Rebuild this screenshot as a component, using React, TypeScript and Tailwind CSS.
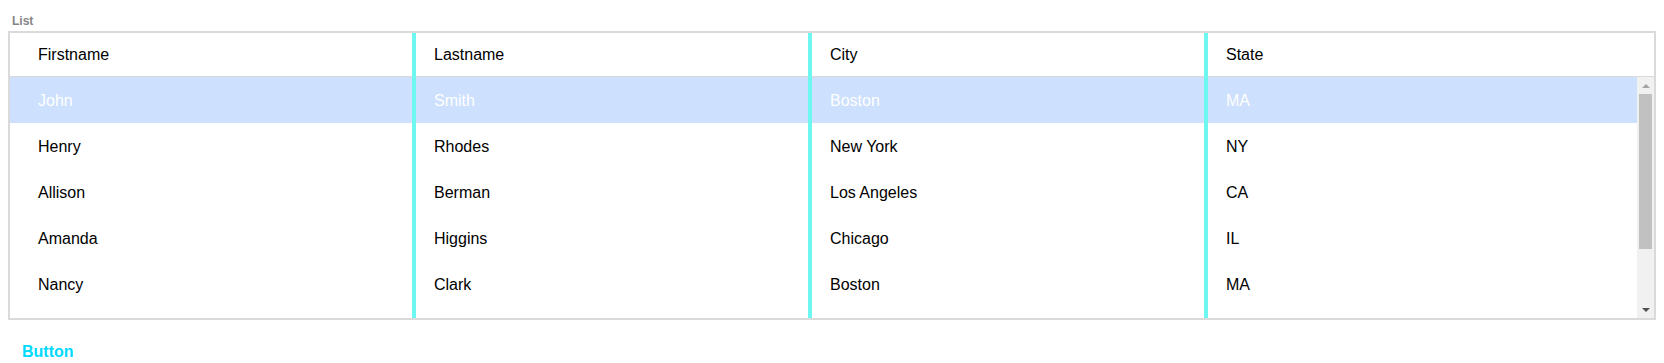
import React from 'react';

const COLUMNS = ['Firstname', 'Lastname', 'City', 'State'];

const ROWS = [
  ['John', 'Smith', 'Boston', 'MA'],
  ['Henry', 'Rhodes', 'New York', 'NY'],
  ['Allison', 'Berman', 'Los Angeles', 'CA'],
  ['Amanda', 'Higgins', 'Chicago', 'IL'],
  ['Nancy', 'Clark', 'Boston', 'MA'],
];

const GRID = 'grid grid-cols-[402px_396px_396px_1fr]';
const CELL_PAD = ['pl-[28px]', 'pl-[22px]', 'pl-[22px]', 'pl-[22px]'];

function Scrollbar() {
  return (
    <div className="w-[17px] shrink-0 bg-[#f1f1f1] flex flex-col">
      <div className="h-[17px] flex items-center justify-center">
        <div className="w-0 h-0 border-l-[4px] border-r-[4px] border-b-[4px] border-l-transparent border-r-transparent border-b-[#a3a3a3]" />
      </div>
      <div className="h-[155px] mx-[2px] bg-[#c1c1c1]" />
      <div className="flex-1" />
      <div className="h-[17px] flex items-center justify-center">
        <div className="w-0 h-0 border-l-[4px] border-r-[4px] border-t-[4px] border-l-transparent border-r-transparent border-t-[#505050]" />
      </div>
    </div>
  );
}

export default function App() {
  const selected = 0;

  return (
    <div className="px-2 pt-[14px] font-['Liberation_Sans',Arial,sans-serif] bg-white">
      <div className="pl-1 mb-[3px] text-[12px] leading-[14px] font-bold text-[#858585]">List</div>

      <div className="border-2 border-[#dadada] relative">
        {/* header */}
        <div className={`${GRID} h-[44px] pt-px border-b border-[#d9d9d9] items-center text-[16px] text-black`}>
          {COLUMNS.map((c, i) => (
            <div key={c} className={CELL_PAD[i]}>
              {c}
            </div>
          ))}
        </div>

        {/* body */}
        <div className="flex h-[241px]">
          <div className="flex-1 overflow-hidden">
            {ROWS.map((row, r) => (
              <div
                key={r}
                className={`${GRID} h-[46px] pt-px items-center text-[16px] ${
                  r === selected ? 'bg-[#cde0fd] text-white' : 'text-black'
                }`}
              >
                {row.map((v, i) => (
                  <div key={i} className={CELL_PAD[i]}>
                    {v}
                  </div>
                ))}
              </div>
            ))}
          </div>
          <Scrollbar />
        </div>

        {/* column resize handles */}
        <div className="absolute top-0 bottom-0 left-[402px] w-[4px] bg-[#6ef6f0]" />
        <div className="absolute top-0 bottom-0 left-[798px] w-[4px] bg-[#6ef6f0]" />
        <div className="absolute top-0 bottom-0 left-[1194px] w-[4px] bg-[#6ef6f0]" />
      </div>

      <div className="mt-5 pl-[14px]">
        <button className="text-[16px] leading-[18px] font-bold text-[#00d9ff]">Button</button>
      </div>
    </div>
  );
}
